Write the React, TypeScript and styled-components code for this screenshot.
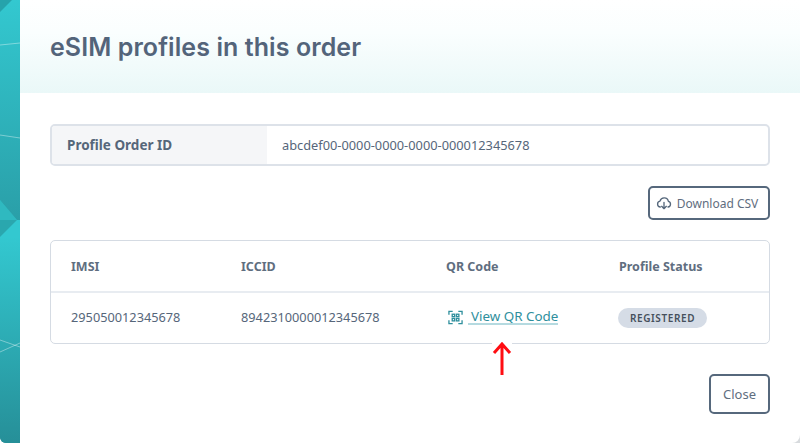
import styled, { createGlobalStyle } from 'styled-components';

const GlobalStyle = createGlobalStyle`
    html, body {
        margin: 0;
        padding: 0;
        height: 100%;
        background: #ffffff;
    }
    body {
        font-family: "Noto Sans", "Liberation Sans", sans-serif;
        color: #56667a;
    }
`;

const Page = styled.div`
    display: flex;
    width: 800px;
    height: 443px;
    overflow: hidden;
    background: linear-gradient(90deg, #ffffff 20px, #d8dbde 20px);
`;

const Backdrop = styled.svg`
    flex: 0 0 20px;
    width: 20px;
    height: 443px;
    border-bottom-left-radius: 6px;
`;

const Modal = styled.main`
    flex: 1;
    display: flex;
    flex-direction: column;
    background: #fff;
    border-bottom-right-radius: 8px;
`;

const Header = styled.header`
    height: 93px;
    padding: 0 30px;
    display: flex;
    align-items: center;
    background: linear-gradient(180deg, #ffffff 0%, #fafefe 35%, #eaf8f8 100%);
`;

const Title = styled.h1`
    margin: 0;
    font-family: Inter, sans-serif;
    font-size: 25px;
    font-weight: 600;
    letter-spacing: 0.08px;
    color: #53647a;
`;

const Body = styled.div`
    display: flex;
    flex-direction: column;
    padding: 31px 30px 0 30px;
`;

const Field = styled.div`
    display: flex;
    height: 42px;
    box-sizing: border-box;
    border: 2px solid #dde2e9;
    border-radius: 5px;
    overflow: hidden;
    font-size: 12.8px;
`;

const FieldLabel = styled.div`
    flex: 0 0 215px;
    display: flex;
    align-items: center;
    padding-left: 15px;
    box-sizing: border-box;
    background: #f5f6f8;
    font-weight: 700;
    font-size: 13.5px;
`;

const FieldValue = styled.div`
    display: flex;
    align-items: center;
    padding-left: 15px;
`;

const Actions = styled.div`
    display: flex;
    justify-content: flex-end;
    margin-top: 20px;
`;

const OutlineButton = styled.button<{ $width: number; $height: number; $size: number; $endInset: number }>`
    display: flex;
    align-items: center;
    justify-content: center;
    gap: 5px;
    box-sizing: border-box;
    padding: 0 ${p => p.$endInset}px 0 0;
    width: ${p => p.$width}px;
    height: ${p => p.$height}px;
    background: #fff;
    border: 2px solid #56687c;
    border-radius: 5px;
    color: #5f6e80;
    font-family: inherit;
    font-size: ${p => p.$size}px;
`;

const TableCard = styled.div`
    margin-top: 20px;
    border: 1px solid #d5dbe3;
    border-radius: 5px;
`;

const Row = styled.div<{ $height: number; $divided?: boolean }>`
    display: grid;
    grid-template-columns: 170px 205px 173px 1fr;
    height: ${p => p.$height}px;
    align-items: center;
    padding-left: 20px;
    font-size: 12.75px;
    border-bottom: ${p => (p.$divided ? '2px solid #e8ecf1' : 'none')};
`;

const HeadCell = styled.div`
    font-weight: 700;
    font-size: 12.5px;
    color: #5f6e80;
`;

const DataCell = styled.div`
    padding-bottom: 2px;
`;

const QrLink = styled.a`
    display: flex;
    align-items: center;
    gap: 5px;
    padding: 0 0 2px 2px;
    color: #2f8f9d;
    font-size: 13.4px;
`;

const QrText = styled.span`
    padding-left: 3px;
    border-bottom: 2px solid #b5dae0;
    line-height: 14px;
`;

const Badge = styled.span`
    justify-self: start;
    display: flex;
    align-items: center;
    height: 20px;
    padding: 0 12px;
    margin-left: -1px;
    border-radius: 10px;
    background: #d5dce6;
    color: #46505c;
    font-size: 10px;
    font-weight: 600;
    letter-spacing: 0.6px;
`;

const ArrowHolder = styled.div`
    position: relative;
    height: 0;
`;

const Arrow = styled.svg`
    position: absolute;
    left: 442px;
    top: -2px;
    width: 20px;
    height: 34px;
`;

const Footer = styled.div`
    display: flex;
    justify-content: flex-end;
    margin-top: 30px;
`;

const CloudIcon = () => (
    <svg width="16" height="16" viewBox="0 0 24 24" fill="none" stroke="#56687c" strokeWidth="2" strokeLinecap="round" strokeLinejoin="round">
        <path d="M6.5 18A4.5 4.5 0 0 1 6 9.1 6.5 6.5 0 0 1 18.6 9.6 4.3 4.3 0 0 1 18 18" />
        <path d="M12 11v9M8.5 17l3.5 3.5 3.5-3.5" />
    </svg>
);

const QrIcon = () => (
    <svg width="15" height="15" viewBox="0 0 16 16" fill="none" stroke="#2f8f9d" strokeWidth="1.4">
        <path d="M1 5V1.5H5M11 1.5H15V5M15 11V14.5H11M5 14.5H1V11" />
        <rect x="4.5" y="4.5" width="2.6" height="2.6" />
        <rect x="9" y="4.5" width="2.6" height="2.6" />
        <rect x="4.5" y="9" width="2.6" height="2.6" />
        <rect x="9" y="9" width="2.6" height="2.6" />
    </svg>
);

export default function App() {
    return (
        <>
            <GlobalStyle />
            <Page>
                <Backdrop viewBox="0 0 20 443">
                    <defs>
                        <linearGradient id="upper" x1="0" y1="0" x2="0" y2="1">
                            <stop offset="0" stopColor="#33c8d0" />
                            <stop offset="1" stopColor="#2a9fa8" />
                        </linearGradient>
                        <linearGradient id="lower" x1="0" y1="0" x2="0" y2="1">
                            <stop offset="0" stopColor="#33c8d0" />
                            <stop offset="1" stopColor="#268f98" />
                        </linearGradient>
                    </defs>
                    <rect width="20" height="443" fill="url(#lower)" y="0" />
                    <path d="M0 0H20V220H17L0 200Z" fill="url(#upper)" />
                    <path d="M0 200L17 220H0Z" fill="#2fb9c0" />
                    <path d="M0 220H17L0 237Z" fill="#2aa7ae" />
                    <path d="M17 220H20V237H0Z" fill="#33c8d0" />
                    <path d="M0 237H20V443H0Z" fill="url(#lower)" />
                    <path d="M0 0H12L0 12Z" fill="#23979f" opacity="0.75" />
                    <path d="M0 45L20 43M0 135L20 138M0 340L20 347M0 352L20 343" stroke="#ffffff" strokeOpacity="0.55" strokeWidth="0.7" fill="none" />
                </Backdrop>
                <Modal>
                    <Header>
                        <Title>eSIM profiles in this order</Title>
                    </Header>
                    <Body>
                        <Field>
                            <FieldLabel>Profile Order ID</FieldLabel>
                            <FieldValue>abcdef00-0000-0000-0000-000012345678</FieldValue>
                        </Field>
                        <Actions>
                            <OutlineButton $width={122} $height={34} $size={12} $endInset={4}>
                                <CloudIcon />
                                Download CSV
                            </OutlineButton>
                        </Actions>
                        <TableCard>
                            <Row $height={50} $divided>
                                <HeadCell>IMSI</HeadCell>
                                <HeadCell>ICCID</HeadCell>
                                <HeadCell>QR Code</HeadCell>
                                <HeadCell>Profile Status</HeadCell>
                            </Row>
                            <Row $height={50}>
                                <DataCell>295050012345678</DataCell>
                                <DataCell>8942310000012345678</DataCell>
                                <QrLink>
                                    <QrIcon />
                                    <QrText>View QR Code</QrText>
                                </QrLink>
                                <Badge>REGISTERED</Badge>
                            </Row>
                        </TableCard>
                        <ArrowHolder>
                            <Arrow viewBox="0 0 20 34">
                                <rect width="20" height="3" fill="#ffffff" />
                                <path d="M10 33V3M2 11L10 2L18 11" fill="none" stroke="#ff0d12" strokeWidth="3" />
                            </Arrow>
                        </ArrowHolder>
                        <Footer>
                            <OutlineButton $width={61} $height={40} $size={13} $endInset={0}>Close</OutlineButton>
                        </Footer>
                    </Body>
                </Modal>
            </Page>
        </>
    );
}
